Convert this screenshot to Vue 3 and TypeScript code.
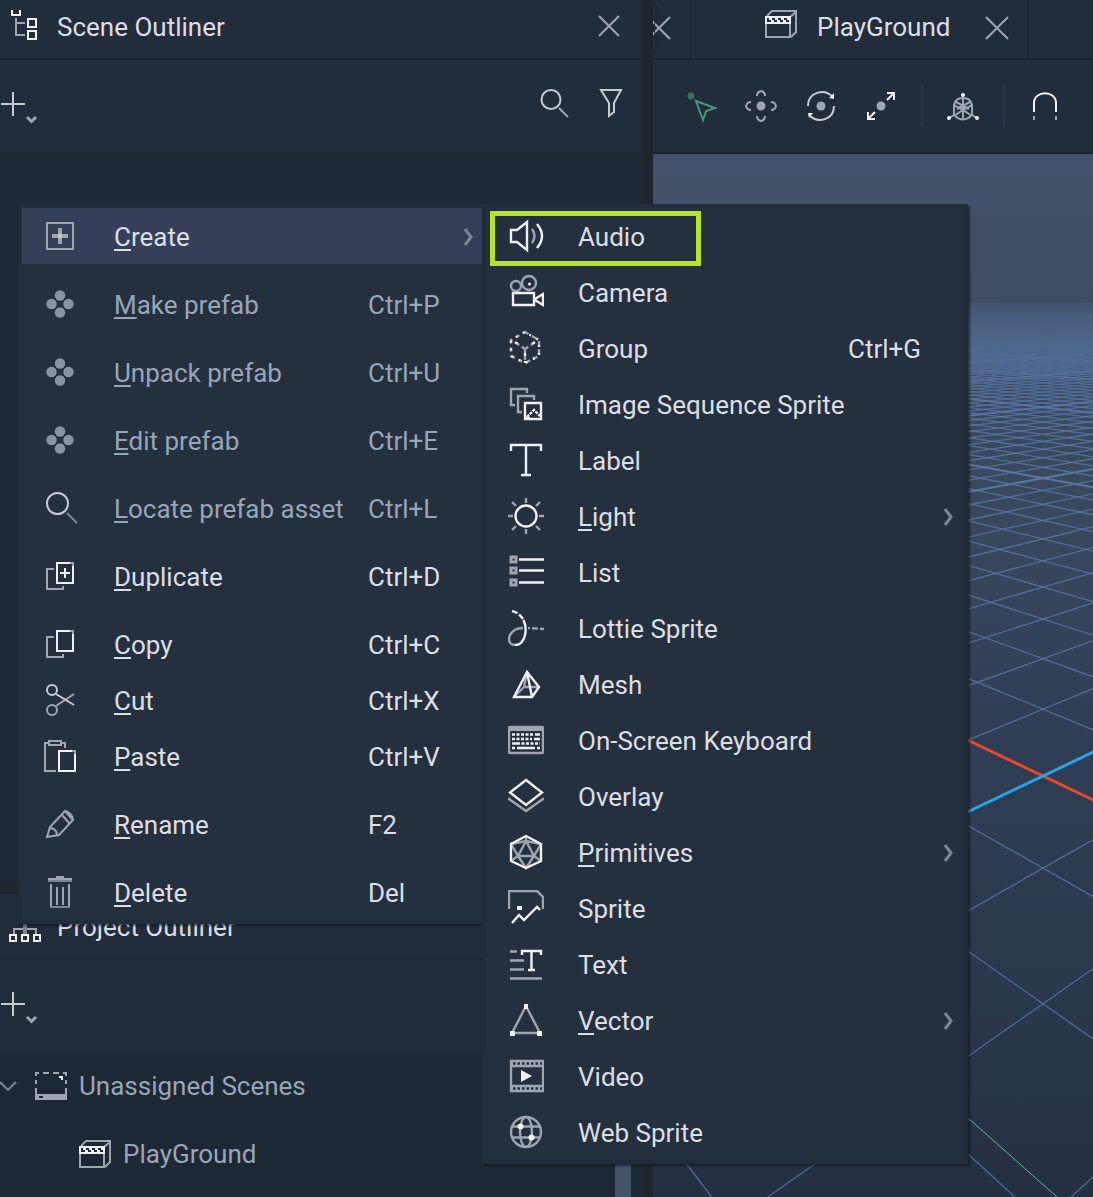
<script setup lang="ts">
import { h } from 'vue'

interface MenuEntry {
  icon: string
  label: string
  mnemonic?: boolean
  shortcut?: string
  submenu?: boolean
  disabled?: boolean
  active?: boolean
  gap?: boolean
}

interface GridLine {
  x1: number
  x2: number
  bold: boolean
}

/* Classes used inside the glyphs: hi / mid / lo / dim pick the stroke, fhi / flo / fdim pick a fill. */
const clover =
  '<g class="fdim"><circle cx="18" cy="9.500" r="5.200"/><circle cx="18" cy="26.500" r="5.200"/><circle cx="9.500" cy="18" r="5.200"/><circle cx="26.500" cy="18" r="5.200"/></g>'
const sheets =
  '<path class="lo" d="M12 11H5V31H21V28"/><path class="hi" d="M15 5H31V25H15Z"/><path class="lo" d="M28 5H31V8"/>'
const scene =
  '<path class="lo" d="M1 13V27H25V13M2 6L7 1H31V22L26 27M25 7L31 2"/><path class="hi" d="M1 7H25V13H1Z"/><path class="hi" stroke-dasharray="3 3" d="M4 9H24M6 11H24"/>'
const plusMenu =
  '<path class="mid" d="M1 18H25M13 6V30"/><path class="lo" stroke-width="3" d="M27 31L31.500 35.500L36 31"/>'

const glyphs: Record<string, string> = {
  create:
    '<path class="lo" d="M5 5H31V31H5Z"/><path class="lo" stroke-width="4" d="M18 10V26M10 18H26"/><path class="hi" stroke-width="4" opacity=".5" d="M16 18H20"/>',
  prefab: clover,
  locate: '<circle class="mid" cx="15.500" cy="13.500" r="10.500"/><path class="dim" d="M25 23L35 33"/>',
  duplicate: sheets + '<path class="hi" d="M18 15H28M23 10V20"/>',
  copy: sheets,
  cut:
    '<circle class="mid" cx="10" cy="8" r="5"/><circle class="lo" cx="10" cy="28" r="5"/><path class="lo" d="M14 24L32 12"/><path class="mid" d="M14 12L32 23"/>',
  paste:
    '<path class="lo" d="M7 5H3V33H14M20 5H23V10M7 3H19V7H7Z"/><path class="hi" d="M17 13H33V33H17Z"/><path class="lo" d="M30 13H33V16"/>',
  rename:
    '<path class="lo" d="M5 31L8 21L23 5L31 14L17 29L5 31ZM20 9L28 18M8 22C12 22 15 25 15 29M24 5C28 7 31 10 31 15"/>',
  remove:
    '<path class="lo" d="M14 3H22M6 5H30M9 10V33M15 13V31M21 13V31M27 10V33"/><path class="dim" d="M6 7H30M8 33H28"/>',
  audio:
    '<path class="hi" d="M3 12H9L19 4V32L9 24H3Z"/><path class="lo" d="M24 11Q29 18 24 25"/><path class="hi" d="M29 6Q39 18 29 30"/>',
  camera:
    '<circle class="lo" cx="21" cy="9" r="7"/><circle class="lo" cx="8" cy="12" r="5"/><circle class="fhi" cx="21.500" cy="10" r="1.500"/><path class="hi" d="M5 19H26V31H5ZM27 25L35 20V31L27 26"/>',
  group:
    '<path class="lo" stroke-dasharray="4 4 5 4" d="M17 2L31 10V26L17 33L3 26V10Z"/><path class="hi" stroke-dasharray="2 6" stroke-dashoffset="-5" d="M17 2L31 10V26L17 33L3 26V10Z"/><path class="lo" stroke-dasharray="4 3" d="M17 19L27 12M17 19L7 12M17 19V33"/><path class="hi" stroke-dasharray="3 5" d="M27 12L21 16M7 12L13 16M17 23V33"/>',
  sequence:
    '<path class="lo" d="M19 7V3H3V19H7M26 14V10H10V26H14"/><path class="hi" d="M17 17H33V33H17Z"/><path class="hi" stroke-dasharray="3 1" d="M19 31L26 24L32 30"/><path class="hi" d="M18 32H22"/>',
  label: '<path class="hi" d="M3 9V3H33V9M18 3V33M13 33H23"/>',
  light:
    '<circle class="hi" cx="18" cy="18" r="10.500"/><path class="lo" d="M18 0V5M18 31V36M0 18H5M31 18H36M4 4L8 8M28 28L32 32M4 32L8 28M28 8L32 4"/>',
  list:
    '<path class="lo" stroke-width="3" d="M3 3H8V8H3ZM3 14H8V19H3ZM3 26H8V31H3Z"/><path class="hi" d="M11 5.500H36M11 16.500H36M11 28.500H36"/>',
  lottie:
    '<path class="lo" d="M15 18C6 18 1 24 1 29C1 32 3 35 7 35"/><path class="hi" d="M7 35C17 35 20 20 15.500 10"/><path class="hi" stroke-dasharray="6 2" d="M15 9C12 5 9 2 4 1"/><path class="lo" stroke-dasharray="6 2" stroke-dashoffset="4" d="M20 18L36 19"/>',
  mesh:
    '<path class="lo" d="M19 6L16 21L6 31M16 21H31"/><path class="hi" d="M19 6L6 31H24L31 21ZM19 6L24 31"/>',
  keyboard:
    '<rect class="lo" x="1" y="5" width="34" height="26" rx="1"/><path class="lo" stroke-width="4" d="M1 7H35"/><path class="hi" stroke-dasharray="3 1.500" d="M4 12.500H26M4 17H24M9 21.500H32"/><path class="hi" d="M27 12.500H32M26 17H32M4 21.500H9M4 26H7M9 26H27M29 26H32"/>',
  overlay: '<path class="hi" d="M18 2L34 14.500L18 27L2 14.500Z"/><path class="lo" d="M2 20L1 21L18 33L35 21L34 20"/>',
  primitives:
    '<path class="lo" d="M18 7L10 22H26ZM18 2V7M3 10L18 7L33 10L26 22L33 27M3 10L10 22L3 27M10 22L18 34L26 22"/><path class="hi" d="M18 2L33 10V27L18 34L3 27V10Z"/>',
  sprite:
    '<path class="lo" d="M1 19V1H29L35 7V19"/><path class="fhi" d="M9 16H14V20H9Z"/><path class="hi" d="M4 33L11 25L16 30L29 17L32 20"/>',
  text:
    '<path class="lo" d="M2 5.500H9M2 14.500H16M2 23.500H16M2 32.500H34"/><path class="hi" d="M14 9V5H33V9M23.500 5V24M20 24H27"/>',
  vector:
    '<path class="lo" d="M18 4L4 31H32Z"/><path class="fhi" d="M16 2H20V7H16ZM2 29H7V34H2ZM29 29H34V34H29Z"/>',
  video:
    '<path class="lo" d="M3 3H35V33H3ZM3 8H35M3 28H35"/><path class="lo" stroke-width="4" stroke-dasharray="2 2.500" d="M3 5.500H35M3 30.500H35"/><path class="fhi" d="M13 12V24L24 18Z"/>',
  web:
    '<g class="lo"><circle cx="18" cy="18" r="15"/><ellipse cx="18" cy="18" rx="6" ry="15"/><path d="M4 12.500H32M4 23.500H32"/></g><circle class="fhi" cx="12.500" cy="12.500" r="3"/><circle class="fhi" cx="23.500" cy="23.500" r="3"/>',
  sceneTree:
    '<path class="lo" d="M7 8V26M7 13H16M7 25H16"/><path class="hi" d="M3 0V5H11V0M19 9H27V17H19ZM19 21H27V29H19Z"/>',
  projectTree:
    '<path class="lo" d="M5 24V19H27V24"/><path class="dim" stroke-width="4" d="M16 4V24"/><path class="hi" d="M1 25H7V31H1ZM13 25H19V31H13ZM25 25H31V31H25Z"/>',
  plusMenu,
  search: '<circle class="mid" cx="14" cy="11.500" r="9.500"/><path class="lo" d="M22 20L31 29"/>',
  filter: '<path class="mid" d="M8 2H28L21 15V24L16 28V15Z"/>',
  close22: '<path class="lo" d="M1 1L21 21M21 1L1 21"/>',
  close24: '<path class="lo" d="M1 5L23 27M23 5L1 27"/>',
  scene,
  folder:
    '<path class="lo" d="M0 1H4M8 1H14M18 1H24M28 1H32M1 0V4M1 8V12M31 0V4M31 8V12M1 16V26M31 16V26"/><path class="flo" fill-rule="evenodd" d="M0 22H32V28H0ZM4 24V26H8V24Z"/><path class="fhi" d="M24 4H28V8H26V6H24Z"/>',
  down: '<path class="dim" d="M0 1L8 9L16 1"/>',
  right: '<path class="dim" stroke-width="3" d="M2 1L8 9L2 17"/>',
  select:
    '<g class="go"><path d="M13 13L32 20L23 23L20 32Z"/></g><circle class="fgo" cx="8" cy="8" r="3.500"/>',
  move:
    '<circle class="flo" cx="18" cy="18" r="4.500"/><path class="lo" d="M14 8Q14 4 18 3Q22 4 22 8M14 28Q14 32 18 33Q22 32 22 28M8 14Q4 14 3 18Q4 22 8 22M28 14Q32 14 33 18Q32 22 28 22"/>',
  rotate:
    '<circle class="flo" cx="18" cy="18" r="4.500"/><path class="mid" d="M5 18C5 4 21 0 30 9M31 18C31 32 15 36 6 27"/><path class="fhi" d="M26 10L31 5V11ZM5 25H10L6 30Z"/>',
  scale:
    '<circle class="flo" cx="18" cy="18" r="4.500"/><path class="hi" d="M24 12L31 5M24 5H31V12M12 24L5 31M5 24V31H12"/>',
  gizmo:
    '<path class="lo" d="M18 6V32M9 28V17Q10 10 18 10Q26 10 27 17V28M9 17L18 22L27 17M9 28L18 22L27 28M4 30L9 27M32 30L27 27M11 14L24 21M25 14L12 21M10 28Q18 35 26 28"/><g class="fhi"><circle cx="18" cy="7" r="2"/><circle cx="4" cy="30" r="2"/><circle cx="32" cy="30" r="2"/></g>',
  magnet: '<path class="hi" d="M7 24V15C7 2 29 2 29 15V24"/><path class="lo" d="M7 28V32M29 28V32"/>',
}

const Glyph = (props: { name: string; w?: number; ht?: number; weight?: number }) => {
  const w = props.w ?? 36
  const ht = props.ht ?? w
  return h('svg', {
    class: 'glyph',
    width: w,
    height: ht,
    viewBox: `0 0 ${w} ${ht}`,
    'stroke-width': props.weight ?? 2,
    'aria-hidden': 'true',
    innerHTML: glyphs[props.name],
  })
}
Glyph.props = ['name', 'w', 'ht', 'weight']

const contextMenu: MenuEntry[] = [
  { icon: 'create', label: 'Create', submenu: true, active: true },
  { icon: 'prefab', label: 'Make prefab', shortcut: 'Ctrl+P', disabled: true, gap: true },
  { icon: 'prefab', label: 'Unpack prefab', shortcut: 'Ctrl+U', disabled: true, gap: true },
  { icon: 'prefab', label: 'Edit prefab', shortcut: 'Ctrl+E', disabled: true, gap: true },
  { icon: 'locate', label: 'Locate prefab asset', shortcut: 'Ctrl+L', disabled: true, gap: true },
  { icon: 'duplicate', label: 'Duplicate', shortcut: 'Ctrl+D', gap: true },
  { icon: 'copy', label: 'Copy', shortcut: 'Ctrl+C', gap: true },
  { icon: 'cut', label: 'Cut', shortcut: 'Ctrl+X' },
  { icon: 'paste', label: 'Paste', shortcut: 'Ctrl+V' },
  { icon: 'rename', label: 'Rename', shortcut: 'F2', gap: true },
  { icon: 'remove', label: 'Delete', shortcut: 'Del', gap: true },
].map((entry) => ({ ...entry, mnemonic: true }))

const createMenu: MenuEntry[] = [
  { icon: 'audio', label: 'Audio' },
  { icon: 'camera', label: 'Camera' },
  { icon: 'group', label: 'Group', shortcut: 'Ctrl+G' },
  { icon: 'sequence', label: 'Image Sequence Sprite' },
  { icon: 'label', label: 'Label' },
  { icon: 'light', label: 'Light', mnemonic: true, submenu: true },
  { icon: 'list', label: 'List' },
  { icon: 'lottie', label: 'Lottie Sprite' },
  { icon: 'mesh', label: 'Mesh' },
  { icon: 'keyboard', label: 'On-Screen Keyboard' },
  { icon: 'overlay', label: 'Overlay' },
  { icon: 'primitives', label: 'Primitives', mnemonic: true, submenu: true },
  { icon: 'sprite', label: 'Sprite' },
  { icon: 'text', label: 'Text' },
  { icon: 'vector', label: 'Vector', mnemonic: true, submenu: true },
  { icon: 'video', label: 'Video' },
  { icon: 'web', label: 'Web Sprite' },
]

const menus = [
  { id: 'context', title: 'Node actions', entries: contextMenu, weight: 2 },
  { id: 'create', title: 'Create', entries: createMenu, weight: 2.4 },
]

const tools = [
  { icon: 'select', title: 'Select' },
  { icon: 'move', title: 'Move' },
  { icon: 'rotate', title: 'Rotate' },
  { icon: 'scale', title: 'Scale' },
]

/* Ground plane: two families of parallel lines, each meeting at its own vanishing point. */
const horizon = 292
const centre = 1043
const spread = 1014
const depth = 905
const grid: GridLine[] = []
for (let i = -6; i <= 240; i++) {
  if (i === 0) continue
  const run = depth * (2.095 + 0.3352 * i)
  for (const side of [1, -1]) {
    grid.push({
      x1: centre - side * spread,
      x2: centre + side * (run - spread),
      bold: i % 10 === 0,
    })
  }
}
const axisRun = depth * 2.095 - spread
</script>

<template>
  <main class="editor">
    <div class="side">
      <section class="panel outliner">
        <header class="panel-head cut">
          <Glyph name="sceneTree" :w="32" />
          <h2>Scene Outliner</h2>
          <button class="icon-btn end" aria-label="Close Scene Outliner"><Glyph name="close22" :w="22" /></button>
        </header>
        <div class="panel-tools">
          <button class="icon-btn" aria-label="Add"><Glyph name="plusMenu" :w="40" /></button>
          <div class="panel-filters">
            <button class="icon-btn" aria-label="Search"><Glyph name="search" /></button>
            <button class="icon-btn" aria-label="Filter"><Glyph name="filter" /></button>
          </div>
        </div>
        <div class="tree"></div>
      </section>
      <div class="split-row"></div>
      <section class="panel">
        <header class="panel-head">
          <Glyph name="projectTree" :w="32" />
          <h2>Project Outliner</h2>
        </header>
        <div class="panel-tools">
          <button class="icon-btn" aria-label="Add"><Glyph name="plusMenu" :w="40" /></button>
        </div>
        <div class="tree scenes">
          <ul>
            <li class="root">
              <Glyph name="down" :w="18" :ht="10" />
              <Glyph name="folder" :w="32" :ht="28" />
              <span>Unassigned Scenes</span>
            </li>
            <li class="child">
              <Glyph name="scene" :w="32" :ht="28" />
              <span>PlayGround</span>
            </li>
          </ul>
          <div class="scroll-thumb"></div>
        </div>
      </section>
    </div>

    <div class="split-col"></div>

    <section class="stage">
      <nav class="tabs">
        <div class="tab clipped">
          <button class="icon-btn" aria-label="Close tab"><Glyph name="close24" :w="24" :ht="28" /></button>
          <svg class="tear" width="8" height="58" viewBox="0 0 8 58" aria-hidden="true">
            <path d="M0 0L6 13L0 28L6 42L0 56" />
          </svg>
        </div>
        <div class="tab current">
          <Glyph name="scene" :w="32" :ht="32" />
          <span class="tab-name">PlayGround</span>
          <button class="icon-btn end" aria-label="Close PlayGround"><Glyph name="close24" :w="24" :ht="28" /></button>
        </div>
      </nav>
      <div class="stage-tools">
        <button v-for="tool in tools" :key="tool.icon" class="icon-btn" :aria-label="tool.title">
          <Glyph :name="tool.icon" />
        </button>
        <i class="rule"></i>
        <button class="icon-btn" aria-label="Gizmo"><Glyph name="gizmo" /></button>
        <i class="rule"></i>
        <button class="icon-btn" aria-label="Snap"><Glyph name="magnet" /></button>
      </div>
      <div class="viewport">
        <svg viewBox="653 154 440 1043" preserveAspectRatio="xMaxYMin slice" aria-hidden="true">
          <defs>
            <linearGradient id="haze" gradientUnits="userSpaceOnUse" x1="0" y1="294" x2="0" y2="434">
              <stop offset="0" stop-color="#fff" stop-opacity="0" />
              <stop offset=".15" stop-color="#fff" stop-opacity=".35" />
              <stop offset=".5" stop-color="#fff" stop-opacity=".75" />
              <stop offset="1" stop-color="#fff" stop-opacity="1" />
            </linearGradient>
            <mask id="fade" maskUnits="userSpaceOnUse" x="653" y="154" width="440" height="1043">
              <rect x="653" y="154" width="440" height="1043" fill="url(#haze)" />
            </mask>
          </defs>
          <g mask="url(#fade)">
            <line
              v-for="(line, i) in grid"
              :key="i"
              class="cell"
              :class="{ bold: line.bold }"
              :x1="line.x1"
              :y1="horizon"
              :x2="line.x2"
              :y2="horizon + depth"
            />
          </g>
          <line class="axis red" :x1="centre - spread" :y1="horizon" :x2="centre + axisRun" :y2="horizon + depth" />
          <line class="axis blue" :x1="centre + spread" :y1="horizon" :x2="centre - axisRun" :y2="horizon + depth" />
          <line class="axis green" x1="968" y1="1118" x2="1057" y2="1197" />
        </svg>
      </div>
    </section>

    <div v-for="menu in menus" :key="menu.id" class="menu" :class="menu.id" role="menu" :aria-label="menu.title">
      <button
        v-for="entry in menu.entries"
        :key="entry.label"
        class="entry"
        :class="{ active: entry.active, disabled: entry.disabled, gap: entry.gap }"
        :aria-disabled="entry.disabled"
        role="menuitem"
      >
        <Glyph :name="entry.icon" :weight="menu.weight" />
        <span class="name"
          ><u v-if="entry.mnemonic">{{ entry.label[0] }}</u
          >{{ entry.mnemonic ? entry.label.slice(1) : entry.label }}</span
        >
        <span v-if="entry.shortcut" class="keys">{{ entry.shortcut }}</span>
        <Glyph v-if="entry.submenu" class="more" name="right" :w="10" :ht="18" />
      </button>
      <div v-if="menu.id === 'create'" class="marker"></div>
    </div>
  </main>
</template>

<style>
body {
  margin: 0;
  background: #1d2835;
}
.glyph {
  display: block;
  flex: none;
  fill: none;
}
.glyph .hi {
  stroke: #f0f1f4;
}
.glyph .mid {
  stroke: #c6cad1;
}
.glyph .lo {
  stroke: #9fa5ae;
}
.glyph .dim {
  stroke: #7d8591;
}
.glyph .go {
  stroke: #429879;
}
.glyph .fhi {
  fill: #f0f1f4;
}
.glyph .flo {
  fill: #9fa5ae;
}
.glyph .fdim {
  fill: #8992a1;
}
.glyph .fgo {
  fill: #37725f;
}
</style>

<style scoped>
.editor {
  position: relative;
  display: flex;
  min-height: 100vh;
  overflow: hidden;
  font-family: Roboto, 'Liberation Sans', sans-serif;
  font-size: 26px;
  line-height: 32px;
  color: #dcdee3;
  background: #1d2835;
}
button {
  border: 0;
  padding: 0;
  background: none;
  font: inherit;
  color: inherit;
  text-align: left;
}
.side {
  display: flex;
  flex-direction: column;
  flex: 641 1 0;
  min-width: 0;
}
.stage {
  display: flex;
  flex-direction: column;
  flex: 440 1 0;
  min-width: 0;
}
.split-col {
  flex: 0 0 12px;
  background: #1e252f;
}
.split-row {
  flex: 0 0 12px;
  background: #1e252f;
}
.outliner {
  display: flex;
  flex-direction: column;
  flex: 1;
}
.panel-head {
  display: flex;
  align-items: center;
  gap: 16px;
  box-sizing: border-box;
  height: 66px;
  padding: 0 21px 0 9px;
  border-bottom: 2px solid #1d2734;
  background: #222d3c;
}
.panel-head.cut {
  height: 60px;
  padding-bottom: 6px;
}
h2 {
  margin: 0;
  padding-top: 2px;
  font-size: 26px;
  font-weight: 400;
}
.tab-name {
  padding-top: 2px;
}
.end {
  margin-left: auto;
}
.panel-tools {
  display: flex;
  align-items: center;
  justify-content: space-between;
  height: 92px;
  padding-right: 12px;
  background: #222d3c;
}
.panel-filters {
  display: flex;
  gap: 20px;
}
.tree {
  flex: 1;
  background: #1d2835;
}
.scenes {
  display: flex;
  justify-content: space-between;
  padding-right: 10px;
}
ul {
  margin: 0;
  padding: 0 0 9px;
  list-style: none;
}
li {
  display: flex;
  align-items: center;
  gap: 12px;
  height: 68px;
  color: #98a5b9;
}
.root .glyph:first-child {
  margin-right: 5px;
}
.child {
  padding-left: 79px;
}
.scroll-thumb {
  width: 16px;
  background: #44536c;
}
.tabs {
  display: flex;
  height: 58px;
  border-bottom: 2px solid #1d2734;
  background: #222d3c;
}
.tab {
  position: relative;
  display: flex;
  align-items: center;
  box-sizing: border-box;
  padding-bottom: 6px;
  border-right: 2px solid #1d2734;
}
.clipped {
  flex: 0 0 38px;
  overflow: hidden;
}
.clipped .icon-btn {
  margin-left: -6px;
}
.tear {
  position: absolute;
  left: 0;
  top: 0;
  fill: none;
  stroke: #20242b;
  stroke-width: 1;
}
.current {
  flex: 0 0 338px;
  gap: 20px;
  padding-left: 74px;
  padding-right: 18px;
}
.stage-tools {
  display: flex;
  align-items: center;
  gap: 24px;
  height: 92px;
  padding-left: 30px;
  border-bottom: 2px solid #1c2430;
  background: #222d3c;
}
.rule {
  flex: 0 0 2px;
  height: 42px;
  margin: 0 -2px;
  background: #2a344a;
}
.viewport {
  position: relative;
  flex: 1;
  overflow: hidden;
  background: linear-gradient(#42536b 0%, #3d4e62 14%, #37475c 37%, #303e55 56%, #2d3c50 66%, #2a384b 80%, #252f42 100%);
}
.viewport svg {
  position: absolute;
  inset: 0;
  width: 100%;
  height: 100%;
}
.cell {
  stroke: #5c7bac;
  stroke-width: 1.3;
  stroke-opacity: 0.75;
}
.cell.bold {
  stroke-width: 2;
  stroke-opacity: 0.9;
}
.axis {
  stroke-width: 3;
}
.red {
  stroke: #e8482a;
}
.blue {
  stroke: #28a0ea;
}
.green {
  stroke: #62b596;
  stroke-width: 1;
}
.menu {
  position: absolute;
  top: 204px;
  display: flex;
  flex-direction: column;
  box-sizing: border-box;
  border: 4px solid #222d3b;
  background: #25303f;
  box-shadow: 2px 2px 2px rgba(12, 16, 24, 0.6);
}
.context {
  left: 18px;
  width: 468px;
}
.create {
  left: 482px;
  width: 486px;
}
.entry {
  position: relative;
  display: flex;
  align-items: center;
  box-sizing: border-box;
  height: 56px;
  padding-left: 20px;
}
.create .entry {
  padding-left: 22px;
}
.gap {
  margin-top: 12px;
}
.active {
  background: #354058;
}
.disabled {
  color: #98a5b9;
}
.name {
  margin-left: 36px;
  padding-top: 2px;
  white-space: nowrap;
}
.create .name {
  margin-left: 34px;
}
u {
  text-decoration-thickness: 2px;
  text-underline-offset: 3px;
  text-decoration-skip-ink: none;
}
.keys {
  position: absolute;
  left: 346px;
  padding-top: 2px;
}
.create .keys {
  left: 362px;
}
.more {
  margin-top: 2px;
  margin-left: auto;
  margin-right: 9px;
}
.create .more {
  margin-right: 11px;
}
.marker {
  position: absolute;
  top: 3px;
  left: 4px;
  box-sizing: border-box;
  width: 211px;
  height: 55px;
  border: 5px solid #b5e61d;
  pointer-events: none;
}
</style>
